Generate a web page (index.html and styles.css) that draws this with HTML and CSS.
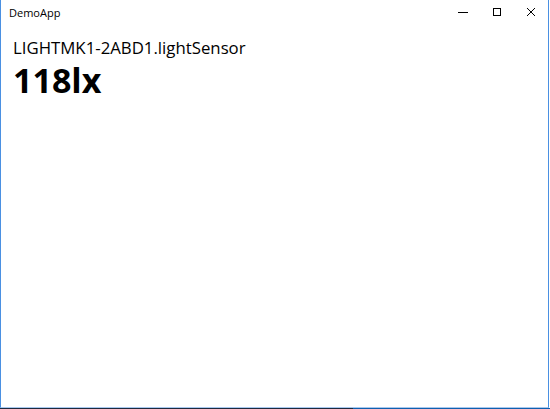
FILE: index.html
```html
<!DOCTYPE html>
<html>
<head>
<meta charset="utf-8">
<link rel="stylesheet" href="styles.css">
</head>
<body>
<div class="window">
  <div class="titlebar">
    <div class="title">DemoApp</div>
    <div class="controls">
      <div class="btn"><svg width="10" height="8" viewBox="0 0 10 8"><path d="M0 4.5H10" stroke="#000" stroke-width="1"/></svg></div>
      <div class="btn"><svg width="8" height="8" viewBox="0 0 8 8"><rect x="0.5" y="0.5" width="7" height="7" fill="none" stroke="#000" stroke-width="1"/></svg></div>
      <div class="btn"><svg width="8" height="8" viewBox="0 0 8 8"><path d="M0 0L8 8M8 0L0 8" stroke="#000" stroke-width="1"/></svg></div>
    </div>
  </div>
  <div class="content">
    <div class="sensor">LIGHTMK1-2ABD1.lightSensor</div>
    <div class="value">118lx</div>
  </div>
</div>
<div class="taskbar"><div class="tb-dark"></div><div class="tb-blue"></div></div>
</body>
</html>
```
FILE: styles.css
```css
html, body { margin: 0; padding: 0; height: 100%; }
body { width: 550px; height: 409px; overflow: hidden; background: #fff; display: flex; flex-direction: column; font-family: "Open Sans", "Noto Sans", sans-serif; }
.window { flex: 1; width: 549px; box-sizing: border-box; border-left: 1px solid #4a90e2; border-right: 1px solid #4a90e2; border-bottom: 1px solid #a9c8ee; display: flex; flex-direction: column; }
.titlebar { height: 24px; display: flex; align-items: center; justify-content: space-between; }
.title { font-size: 11px; color: #000; padding-left: 8px; padding-top: 1px; }
.controls { display: flex; height: 100%; }
.btn { width: 34px; height: 24px; display: flex; align-items: center; justify-content: center; }
.content { padding: 13px 12px 0 12px; }
.sensor { font-size: 16.8px; color: #000; line-height: 22px; }
.value { font-size: 34px; font-weight: 700; color: #000; line-height: 42px; margin-top: 0; }
.taskbar { height: 1px; display: flex; }
.tb-dark { width: 353px; background: #1c2a3f; }
.tb-blue { flex: 1; background: #0f5fae; }
```
